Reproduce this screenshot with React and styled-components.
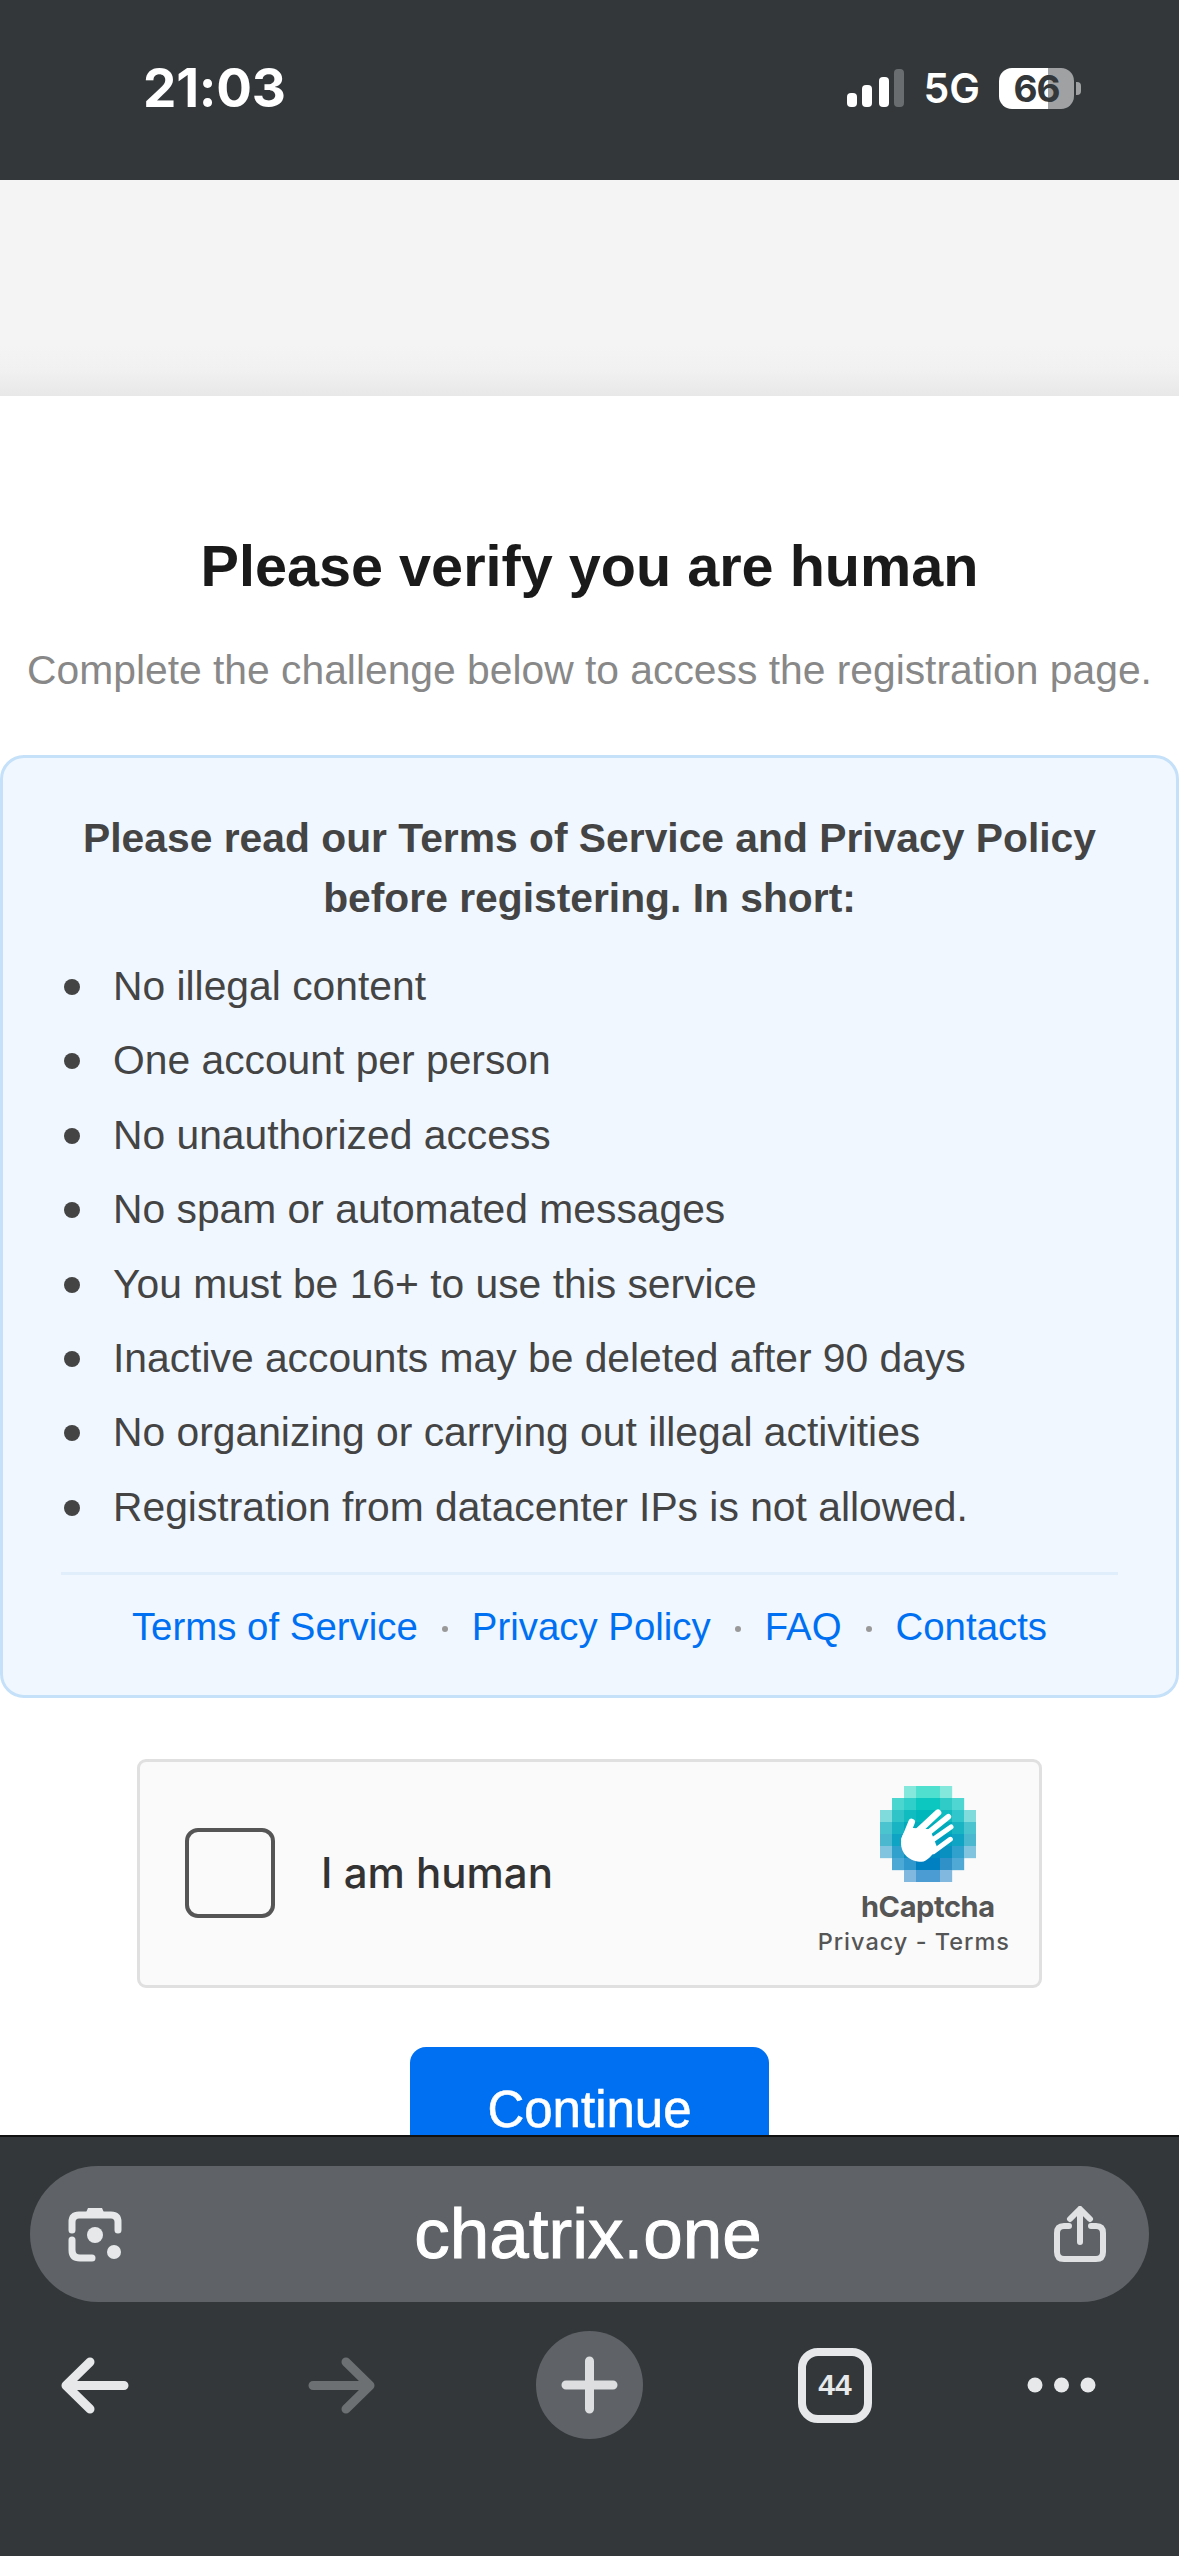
import React from "react";
import styled, { createGlobalStyle } from "styled-components";

const rules = [
  "No illegal content",
  "One account per person",
  "No unauthorized access",
  "No spam or automated messages",
  "You must be 16+ to use this service",
  "Inactive accounts may be deleted after 90 days",
  "No organizing or carrying out illegal activities",
  "Registration from datacenter IPs is not allowed.",
];

const links = ["Terms of Service", "Privacy Policy", "FAQ", "Contacts"];

const logoRows = [
  [2, ["#84e8dd", "#4fe0d0", "#4fe0d0", "#84e8dd"]],
  [1, ["#4bd6cf", "#30cfc9", "#0cc7bf", "#0cc7bf", "#30cbc7", "#4fd6d2"]],
  [0, ["#80dcdc", "#30c4c8", "#10bcc0", "#00b8bc", "#00b8bc", "#10bcc0", "#30c6cc", "#80dcdc"]],
  [0, ["#4cc4d0", "#18b4c4", "#00acbc", "#00acbc", "#00acbc", "#00acbc", "#18b4c4", "#4cc4d0"]],
  [0, ["#4cb8d0", "#10a4c4", "#00a0c0", "#00a0c0", "#00a0c0", "#00a0c0", "#10a4c4", "#4cb8d0"]],
  [0, ["#80c4e0", "#30a0cc", "#0a90c0", "#0088c0", "#0088c0", "#0a90c0", "#30a0cc", "#80c4e0"]],
  [1, ["#4ca8d4", "#3098cc", "#0080c0", "#0080c0", "#3090c8", "#50a8d4"]],
  [2, ["#80b8e0", "#4c9cd4", "#4c9cd4", "#80b8e0"]],
];

const HCaptchaLogo = () => (
  <LogoSvg viewBox="0 0 288 288">
    {logoRows.map(([start, cells], y) =>
      cells.map((fill, x) => (
        <rect key={`${x}-${y}`} x={(start + x) * 36} y={y * 36} width="36.5" height="36.5" fill={fill} />
      ))
    )}
    <path d="M63 170 C63 150 72 135 90 125 L150 130 L172 185 C160 205 140 227 125 227 C90 227 63 205 63 170 Z" fill="#fff" />
    <g stroke="#fff" strokeLinecap="round" fill="none">
      <path d="M74 160 L95 108" strokeWidth="20" />
      <path d="M115 135 L174 80" strokeWidth="20" />
      <path d="M145 140 L205 92" strokeWidth="17" />
      <path d="M160 160 L213 123" strokeWidth="15" />
      <path d="M160 197 L211 160" strokeWidth="15" />
    </g>
  </LogoSvg>
);

const App = () => {
  return (
    <Screen>
      <GlobalStyle />
      <StatusBar>
        <Time>21:03</Time>
        <StatusRight>
          <SignalSvg viewBox="0 0 57 38">
            <rect x="0" y="24" width="10" height="14" rx="4" fill="#fff" />
            <rect x="15" y="16" width="10" height="22" rx="4" fill="#fff" />
            <rect x="32" y="8" width="10" height="30" rx="4" fill="#fff" />
            <rect x="47" y="0" width="10" height="38" rx="4" fill="#6a6d70" />
          </SignalSvg>
          <Network>5G</Network>
          <Battery>66</Battery>
        </StatusRight>
      </StatusBar>

      <Page>
        <TopBand />
        <Title>Please verify you are human</Title>
        <Subtitle>Complete the challenge below to access the registration page.</Subtitle>

        <InfoBox>
          <InfoHeading>
            Please read our Terms of Service and Privacy Policy
            <br />
            before registering. In short:
          </InfoHeading>
          <RuleList>
            {rules.map((rule) => (
              <li key={rule}>{rule}</li>
            ))}
          </RuleList>
          <LinkRow>
            {links.map((link, i) => (
              <React.Fragment key={link}>
                {i > 0 && <LinkDot />}
                <InfoLink>{link}</InfoLink>
              </React.Fragment>
            ))}
          </LinkRow>
        </InfoBox>

        <Captcha>
          <CheckBox />
          <CaptchaLabel>I am human</CaptchaLabel>
          <CaptchaBrand>
            <HCaptchaLogo />
            <BrandName>hCaptcha</BrandName>
            <BrandLinks>Privacy - Terms</BrandLinks>
          </CaptchaBrand>
        </Captcha>

        <ContinueButton>Continue</ContinueButton>
      </Page>

      <BrowserBar>
        <UrlPill>
          <PillIcon width="54" height="56" viewBox="0 0 54 56">
            <path d="M17 9 L20 2 H34 L37 9 Z" fill="#e6e8ea" />
            <path d="M4 24 V16 Q4 9 11 9 H43 Q50 9 50 16 V24" fill="none" stroke="#e6e8ea" strokeWidth="7" strokeLinecap="round" />
            <path d="M4 34 V44 Q4 52 12 52 H24" fill="none" stroke="#e6e8ea" strokeWidth="7" strokeLinecap="round" />
            <circle cx="27" cy="29" r="8" fill="#e6e8ea" />
            <circle cx="46" cy="46" r="7" fill="#e6e8ea" />
          </PillIcon>
          <UrlText>chatrix.one</UrlText>
          <PillIcon width="52" height="56" viewBox="0 0 52 56">
            <path d="M15 20 H10 Q3 20 3 27 V46 Q3 53 10 53 H42 Q49 53 49 46 V27 Q49 20 42 20 H37" fill="none" stroke="#dfe1e3" strokeWidth="6" strokeLinecap="round" />
            <path d="M26 36 V4 M16 13 L26 3 L36 13" fill="none" stroke="#dfe1e3" strokeWidth="6" strokeLinecap="round" strokeLinejoin="round" />
          </PillIcon>
        </UrlPill>

        <Toolbar>
          <ToolIcon width="69" height="57" viewBox="0 0 69 57">
            <path d="M30 5 L6 28.5 L30 52 M6 28.5 H64" fill="none" stroke="#e6e8ea" strokeWidth="9" strokeLinecap="round" strokeLinejoin="round" />
          </ToolIcon>
          <ToolIcon $gap={179} width="68" height="57" viewBox="0 0 68 57">
            <path d="M38 5 L62 28.5 L38 52 M62 28.5 H5" fill="none" stroke="#6d7072" strokeWidth="9" strokeLinecap="round" strokeLinejoin="round" />
          </ToolIcon>
          <PlusButton>
            <svg width="57" height="58" viewBox="0 0 57 58">
              <path d="M28.5 5 V53 M5 29 H52" fill="none" stroke="#dcdee0" strokeWidth="9" strokeLinecap="round" />
            </svg>
          </PlusButton>
          <TabCount>44</TabCount>
          <ToolIcon $gap={155} width="69" height="16" viewBox="0 0 69 16">
            <circle cx="8" cy="8" r="7.5" fill="#e6e8ea" />
            <circle cx="34.5" cy="8" r="7.5" fill="#e6e8ea" />
            <circle cx="61" cy="8" r="7.5" fill="#e6e8ea" />
          </ToolIcon>
        </Toolbar>
      </BrowserBar>
    </Screen>
  );
};

const GlobalStyle = createGlobalStyle`
  html, body {
    margin: 0;
    padding: 0;
    background: #fff;
  }
`

const Screen = styled.div`
  display: flex;
  flex-direction: column;
  width: 1179px;
  height: 2556px;
  overflow: hidden;
  font-family: "Liberation Sans", Arial, sans-serif;
`

const StatusBar = styled.div`
  flex: 0 0 180px;
  display: flex;
  justify-content: space-between;
  align-items: flex-start;
  box-sizing: border-box;
  padding: 58px 105px 0 143px;
  background: #33373a;
  color: #fff;
`

const Time = styled.div`
  font-family: "Inter", sans-serif;
  font-size: 53px;
  font-weight: 700;
  line-height: 60px;
  letter-spacing: -0.2px;
`

const StatusRight = styled.div`
  display: flex;
  align-items: center;
  height: 60px;
`

const SignalSvg = styled.svg`
  width: 57px;
  height: 38px;
`

const Network = styled.div`
  margin-left: 20px;
  font-family: "Inter", sans-serif;
  font-size: 41px;
  font-weight: 600;
`

const Battery = styled.div`
  position: relative;
  display: flex;
  justify-content: center;
  align-items: center;
  width: 75px;
  height: 41px;
  margin-left: 19px;
  border-radius: 13px;
  background: linear-gradient(to right, #fff 65%, #9fa1a3 65%);
  color: #33373a;
  font-family: "Inter", sans-serif;
  font-size: 37px;
  font-weight: 700;
  letter-spacing: -1px;

  &::after {
    content: "";
    position: absolute;
    left: 77px;
    top: 14px;
    width: 5px;
    height: 13px;
    border-radius: 0 4px 4px 0;
    background: #9fa1a3;
  }
`

const Page = styled.div`
  flex: 1;
  min-height: 0;
  overflow: hidden;
  display: flex;
  flex-direction: column;
  align-items: center;
  background: #fff;
`

const TopBand = styled.div`
  flex: 0 0 216px;
  align-self: stretch;
  background: linear-gradient(to bottom, #f4f4f4 0, #f4f4f4 165px, #f1f1f1 190px, #e8e8e8 100%);
`

const Title = styled.h1`
  margin: 134px 0 0;
  font-size: 57.6px;
  font-weight: 700;
  line-height: 72px;
  color: #1a1a1a;
`

const Subtitle = styled.p`
  margin: 43px 0 0;
  font-size: 40.8px;
  line-height: 50px;
  color: #888;
  white-space: nowrap;
`

const InfoBox = styled.div`
  box-sizing: border-box;
  flex: 0 0 943px;
  align-self: stretch;
  margin-top: 60px;
  padding: 50px 58px 0;
  border: 3px solid #c5e0f9;
  border-radius: 24px;
  background: #f0f7ff;
`

const InfoHeading = styled.div`
  font-size: 40.8px;
  font-weight: 700;
  line-height: 60px;
  text-align: center;
  color: #444;
`

const RuleList = styled.ul`
  margin: 27px 0 0;
  padding: 0 0 34px 52px;
  border-bottom: 3px solid #e0edfb;
  list-style: none;
  font-size: 40.8px;
  line-height: 62.4px;
  color: #444;

  li {
    position: relative;
    margin-bottom: 12px;
  }

  li:last-child {
    margin-bottom: 0;
  }

  li::before {
    content: "";
    position: absolute;
    left: -49px;
    top: 24px;
    width: 16px;
    height: 16px;
    border-radius: 50%;
    background: #444;
  }
`

const LinkRow = styled.div`
  display: flex;
  justify-content: center;
  align-items: center;
  margin-top: 24px;
  line-height: 56px;
  font-size: 38.4px;
`

const InfoLink = styled.span`
  color: #0070f3;
`

const LinkDot = styled.span`
  width: 6px;
  height: 6px;
  margin: 4px 24px 0;
  border-radius: 50%;
  background: #999;
`

const Captcha = styled.div`
  box-sizing: border-box;
  flex: 0 0 229px;
  display: flex;
  align-items: center;
  width: 905px;
  margin-top: 61px;
  padding: 0 29px 2px 45px;
  border: 3px solid #e0e0e0;
  border-radius: 9px;
  background: #fafafa;
`

const CheckBox = styled.div`
  box-sizing: border-box;
  width: 90px;
  height: 90px;
  border: 4px solid #555;
  border-radius: 13px;
  background: #fafafa;
`

const CaptchaLabel = styled.div`
  margin-left: 46px;
  font-family: "Inter", sans-serif;
  font-size: 42px;
  font-weight: 500;
  color: #333;
`

const CaptchaBrand = styled.div`
  align-self: flex-start;
  margin-left: auto;
  padding-top: 24px;
  display: flex;
  flex-direction: column;
  align-items: center;
  color: #555;
  font-family: "Inter", sans-serif;
`

const LogoSvg = styled.svg`
  display: block;
  width: 96px;
  height: 96px;
  margin-left: 29px;
`

const BrandName = styled.div`
  margin: 7px 0 0 28px;
  font-size: 29px;
  font-weight: 700;
  line-height: 36px;
  letter-spacing: -0.4px;
`

const BrandLinks = styled.div`
  margin-top: 3px;
  font-size: 23.5px;
  font-weight: 500;
  line-height: 28px;
  letter-spacing: 1px;
`

const ContinueButton = styled.div`
  flex: 0 0 auto;
  box-sizing: border-box;
  width: 359px;
  height: 110px;
  margin-top: 59px;
  padding-top: 37px;
  border-radius: 16px;
  background: #0070f3;
  color: #fff;
  font-size: 51px;
  line-height: 51px;
  text-align: center;
  -webkit-text-stroke: 0.6px #fff;
`

const BrowserBar = styled.div`
  flex: 0 0 421px;
  box-sizing: border-box;
  padding: 29px 30px 0;
  border-top: 2px solid #111;
  background: #33373a;
`

const UrlPill = styled.div`
  display: flex;
  justify-content: space-between;
  align-items: center;
  box-sizing: border-box;
  width: 1119px;
  height: 136px;
  padding: 0 43px 0 38px;
  border-radius: 68px;
  background: #5f6367;
`

const PillIcon = styled.svg`
  flex: none;
`

const UrlText = styled.div`
  color: #fff;
  font-size: 71px;
  line-height: 80px;
  -webkit-text-stroke: 1px #fff;
`

const Toolbar = styled.div`
  display: flex;
  align-items: center;
  height: 108px;
  margin: 29px 0 0 30px;
`

const ToolIcon = styled.svg`
  flex: none;
  margin-left: ${(props) => props.$gap || 0}px;
`

const PlusButton = styled.div`
  display: flex;
  justify-content: center;
  align-items: center;
  width: 107px;
  height: 108px;
  margin-left: 160px;
  border-radius: 50%;
  background: #5f6367;
`

const TabCount = styled.div`
  box-sizing: border-box;
  display: flex;
  justify-content: center;
  align-items: center;
  width: 74px;
  height: 75px;
  margin-left: 155px;
  border: 8px solid #e6e8ea;
  border-radius: 20px;
  color: #e6e8ea;
  font-size: 30px;
  font-weight: 700;
`

export default App;
